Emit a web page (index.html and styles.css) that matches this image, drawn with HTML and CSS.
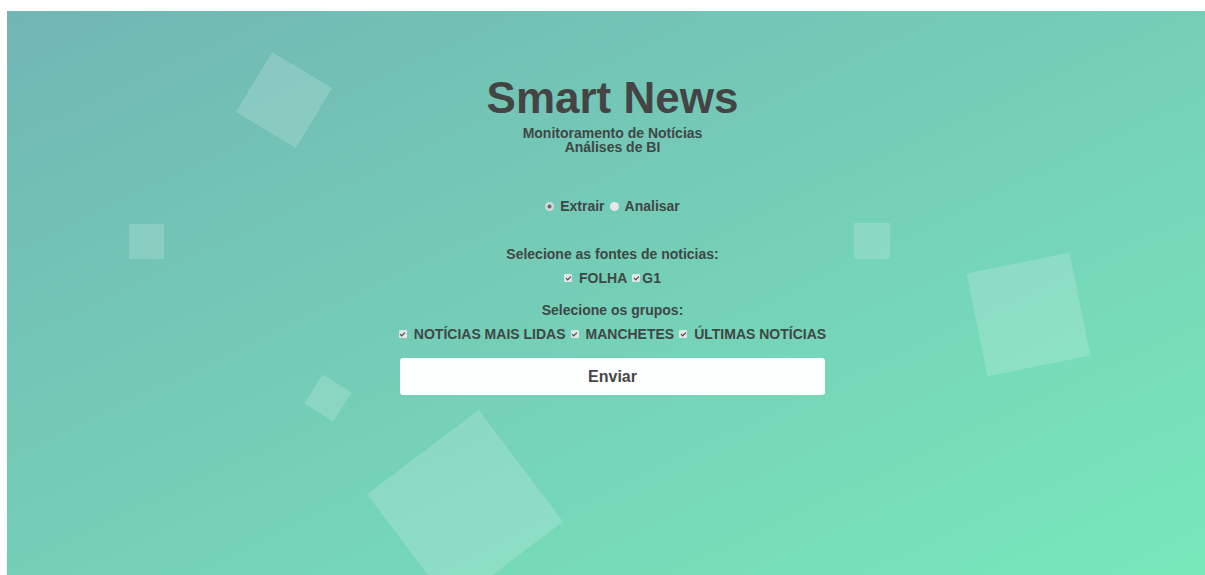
FILE: index.html
```html
<!DOCTYPE html>
<html lang="pt-BR">
<head>
<meta charset="utf-8">
<title>Smart News</title>
<link rel="stylesheet" href="styles.css">
</head>
<body>
<div class="scene">
  <ul class="bubbles" aria-hidden="true">
    <li class="bubble b1"></li>
    <li class="bubble b2"></li>
    <li class="bubble b3"></li>
    <li class="bubble b4"></li>
    <li class="bubble b5"></li>
    <li class="bubble b6"></li>
  </ul>

  <main class="panel">
    <h1 class="brand">Smart News</h1>
    <p class="tagline">Monitoramento de Notícias<br>Análises de BI</p>

    <form class="form">
      <div class="modes">
        <label class="opt"><input type="radio" name="modo" value="extrair" checked><span>Extrair</span></label>
        <label class="opt"><input type="radio" name="modo" value="analisar"><span>Analisar</span></label>
      </div>

      <p class="heading heading-sources">Selecione as fontes de noticias:</p>
      <div class="choices">
        <label class="opt"><input type="checkbox" name="fonte" value="folha" checked><span>FOLHA</span></label>
        <label class="opt opt-tight"><input type="checkbox" name="fonte" value="g1" checked><span>G1</span></label>
      </div>

      <p class="heading heading-groups">Selecione os grupos:</p>
      <div class="choices">
        <label class="opt"><input type="checkbox" name="grupo" value="mais-lidas" checked><span>NOTÍCIAS MAIS LIDAS</span></label>
        <label class="opt"><input type="checkbox" name="grupo" value="manchetes" checked><span>MANCHETES</span></label>
        <label class="opt"><input type="checkbox" name="grupo" value="ultimas" checked><span>ÚLTIMAS NOTÍCIAS</span></label>
      </div>

      <button type="submit" class="submit">Enviar</button>
    </form>
  </main>
</div>
</body>
</html>
```

FILE: styles.css
```css
html, body {
  margin: 0;
  height: 100%;
  overflow: hidden;
  background: #ffffff;
}

body {
  padding: 11px 0 0 7px;
  box-sizing: border-box;
  font-family: "Liberation Sans", Arial, sans-serif;
  color: #3f4745;
}

/* gradient stage with the floating squares behind the form */
.scene {
  position: relative;
  height: 100%;
  overflow: hidden;
  background: linear-gradient(to bottom right, #71b6b4 0%, #78e8ba 100%);
}

.bubbles {
  list-style: none;
  margin: 0;
  padding: 0;
}

.bubble {
  position: absolute;
  background: rgba(255, 255, 255, 0.17);
}

.b1 { left: 242px; top: 54px;  width: 70px;  height: 70px;  transform: rotate(31deg); }
.b2 { left: 122px; top: 213px; width: 35px;  height: 35px; }
.b3 { left: 847px; top: 212px; width: 36px;  height: 36px; }
.b4 { left: 304px; top: 370px; width: 34px;  height: 34px;  transform: rotate(32deg); }
.b5 { left: 388px; top: 427px; width: 140px; height: 140px; transform: rotate(-37deg); }
.b6 { left: 969px; top: 251px; width: 105px; height: 105px; transform: rotate(-11.5deg); }

.panel {
  position: relative;
  display: flex;
  flex-direction: column;
  align-items: center;
  padding: 62px 0 0 13px;
  text-align: center;
}

.brand {
  margin: 0;
  font-size: 44px;
  line-height: 50px;
  font-weight: bold;
  color: #444444;
}

.tagline {
  margin: 3px 0 0;
  font-size: 14px;
  line-height: 14px;
  font-weight: bold;
}

.form {
  display: flex;
  flex-direction: column;
  align-items: center;
  font-size: 14px;
  line-height: 16px;
  font-weight: bold;
}

.modes {
  display: flex;
  align-items: center;
  margin-top: 44px;
}

.heading {
  margin: 0;
}

.heading-sources { margin-top: 32px; }
.heading-groups  { margin-top: 16px; }

.choices {
  display: flex;
  align-items: center;
  margin-top: 8px;
}

.opt {
  display: inline-flex;
  align-items: center;
  margin-right: 5px;
}

.opt:last-child { margin-right: 0; }

.opt input {
  -webkit-appearance: none;
  appearance: none;
  position: relative;
  margin: 0 7px 0 0;
  flex: none;
  background: #e3e5e4;
}

.opt-tight input { margin-right: 2px; }

/* small grey check boxes with a dark tick */
.opt input[type="checkbox"] {
  width: 8px;
  height: 8px;
  border-radius: 1px;
}

.opt input[type="checkbox"]:checked::after {
  content: "";
  position: absolute;
  left: 2.5px;
  top: 0.5px;
  width: 1.5px;
  height: 4px;
  border: solid #3a3a3a;
  border-width: 0 1.5px 1.5px 0;
  transform: rotate(45deg);
}

/* round radios, dark dot when selected */
.opt input[type="radio"] {
  width: 9px;
  height: 9px;
  border-radius: 50%;
  margin-right: 6px;
  background: #e6e8e7;
}

.opt input[type="radio"]:checked {
  background: radial-gradient(circle, #666666 0 1.8px, #d6d8d7 2.3px);
}

.submit {
  margin-top: 16px;
  width: 425px;
  height: 37px;
  border: 0;
  border-radius: 3px;
  background: #fdfefe;
  font-family: inherit;
  font-size: 16px;
  font-weight: bold;
  color: #474747;
  cursor: pointer;
}
```
